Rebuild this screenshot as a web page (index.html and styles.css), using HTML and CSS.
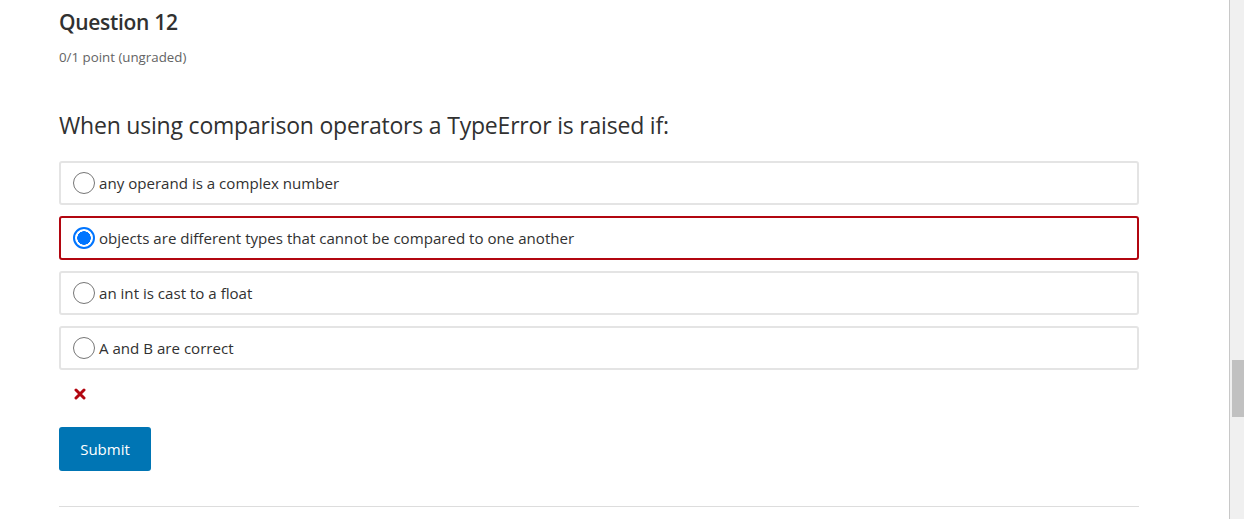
FILE: index.html
```html
<!DOCTYPE html>
<html>
<head>
<meta charset="utf-8">
<link rel="stylesheet" href="styles.css">
</head>
<body>
<div class="page">
  <main class="content">
    <h3 class="title">Question 12</h3>
    <div class="points">0/1 point (ungraded)</div>
    <p class="prompt">When using comparison operators a TypeError is raised if:</p>
    <div class="options">
      <label class="option"><span class="radio"></span><span class="label-text">any operand is a complex number</span></label>
      <label class="option selected"><span class="radio checked"></span><span class="label-text">objects are different types that cannot be compared to one another</span></label>
      <label class="option"><span class="radio"></span><span class="label-text">an int is cast to a float</span></label>
      <label class="option"><span class="radio"></span><span class="label-text">A and B are correct</span></label>
    </div>
    <div class="status">
      <svg width="12" height="12" viewBox="0 0 12 12"><path d="M2 2 L10 10 M10 2 L2 10" stroke="#b20610" stroke-width="3" stroke-linecap="round"/></svg>
    </div>
    <button class="submit">Submit</button>
    <hr class="sep">
  </main>
  <div class="scrollbar"><div class="thumb"></div></div>
</div>
</body>
</html>
```
FILE: styles.css
```css
html, body { margin: 0; padding: 0; background: #fff; }
body { font-family: "Open Sans", "Noto Sans", sans-serif; color: #313131; }
.page { display: flex; height: 519px; overflow: hidden; }
.content { flex: 1; padding-left: 59px; }
.content > * { width: 1080px; }
.title { margin: 0; padding-top: 8px; font-size: 21px; font-weight: 600; color: #313131; line-height: 28px; letter-spacing: -0.3px; }
.points { margin-top: 13px; font-size: 13.3px; color: #646464; line-height: 16px; }
.prompt { margin: 45px 0 0; font-size: 23px; line-height: 30px; color: #313131; letter-spacing: -0.2px; }
.options { margin-top: 21px; display: flex; flex-direction: column; gap: 11px; }
.option { box-sizing: border-box; height: 44px; border: 2px solid #e4e4e4; border-radius: 3px; display: flex; align-items: center; padding-left: 12px; font-size: 15.1px; color: #313131; }
.option.selected { border-color: #b20610; }
.radio { box-sizing: border-box; width: 22px; height: 22px; border: 1px solid #767676; border-radius: 50%; margin-right: 4px; flex: none; background: #fff; }
.radio.checked { border: 2px solid #0075ff; background: radial-gradient(circle, #0075ff 0 6.5px, #fff 7px); }
.status { margin-top: 18px; height: 14px; padding-left: 15px; }
.status svg { display: block; }
.submit { display: block; margin-top: 25px; width: 92px; height: 44px; border: none; border-radius: 3px; background: #0075b4; color: #fff; font-family: inherit; font-size: 15px; padding: 0; }
.sep { margin: 35px 0 0; border: none; border-top: 1px solid #ddd; height: 0; }
.scrollbar { flex: none; width: 14px; border-left: 1px solid #c8c8c8; background: #f0f0f0; position: relative; }
.thumb { position: absolute; left: 2px; right: 0; top: 360px; height: 57px; background: #c1c1c1; }
```
